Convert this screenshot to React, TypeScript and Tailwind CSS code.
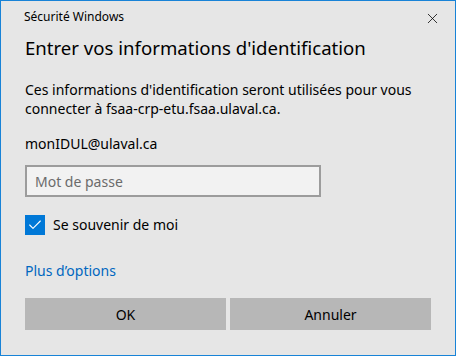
import { Check, X } from "lucide-react";

const font = { fontFamily: '"Noto Sans", "Open Sans", sans-serif' };

export default function App() {
    return (
        <div
            className="w-[456px] h-[356px] box-border border border-[#1883d7] bg-[#e6e6e6] text-black flex flex-col"
            style={font}
        >
            {/* barre de titre */}
            <div className="flex items-start justify-between pl-[23px] pr-[14px] pt-[8px] h-[33px]">
                <span className="text-[12px] leading-[16px]">Sécurité Windows</span>
                <X className="w-[17px] h-[17px] mt-[1px]" strokeWidth={1.1} />
            </div>

            <div className="flex flex-col px-[24px]">
                <h1 className="text-[18.6px] leading-[28px] font-normal">Entrer vos informations d'identification</h1>

                <p className="mt-[18px] text-[14px] leading-[19px]">
                    Ces informations d'identification seront utilisées pour vous connecter à
                    fsaa-crp-etu.fsaa.ulaval.ca.
                </p>

                <div className="mt-[16px] text-[14px] leading-[19px]">monIDUL@ulaval.ca</div>

                <div className="mt-[12px] w-[296px] h-[32px] border-2 border-[#9c9c9c] bg-[#f2f2f2] flex items-center px-[8px]">
                    <span className="text-[14px] text-[#6b6b6b]">Mot de passe</span>
                </div>

                <label className="mt-[17px] flex items-center gap-[8px] text-[14px]">
                    <span className="w-[20px] h-[20px] bg-[#0078d7] flex items-center justify-center">
                        <Check className="w-[16px] h-[16px] text-white" strokeWidth={1.6} />
                    </span>
                    Se souvenir de moi
                </label>

                <a className="mt-[26px] text-[14px] leading-[19px] text-[#0067c0]">Plus d’options</a>

                <div className="mt-[18px] grid grid-cols-2 gap-[4px] w-[406px]">
                    <button className="h-[32px] bg-[#b7b7b7] text-[14px]">OK</button>
                    <button className="h-[32px] bg-[#b7b7b7] text-[14px]">Annuler</button>
                </div>
            </div>
        </div>
    );
}
